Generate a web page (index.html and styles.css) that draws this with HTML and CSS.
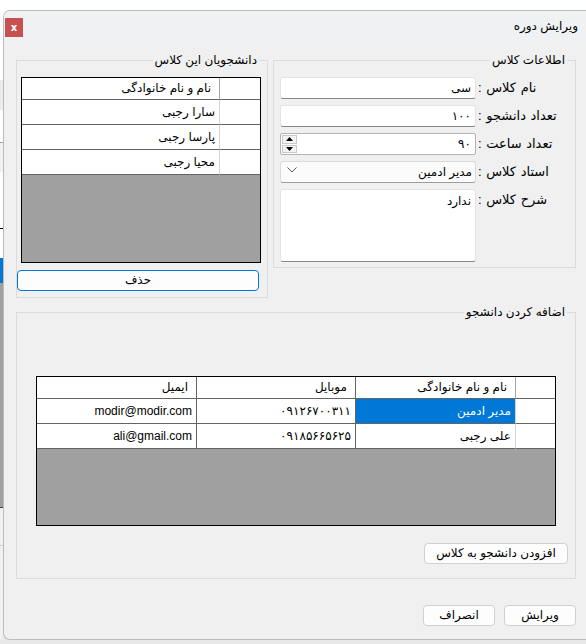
FILE: index.html
```html
<!DOCTYPE html>
<html lang="fa" dir="rtl">
<head>
<meta charset="utf-8">
<title>ویرایش دوره</title>
<link rel="stylesheet" href="styles.css">
</head>
<body>
<div class="desk">
  <div class="window">
    <header class="titlebar">
      <span class="title">ویرایش دوره</span>
      <button class="close" type="button">x</button>
    </header>

    <main class="content">
      <div class="top-row">
        <fieldset class="group info">
          <legend>اطلاعات کلاس</legend>
          <div class="form">
            <label class="label">نام کلاس :</label>
            <input class="field" value="سی">

            <label class="label">تعداد دانشجو :</label>
            <input class="field" value="۱۰۰">

            <label class="label">تعداد ساعت :</label>
            <div class="spin">
              <input class="spin-input" value="۹۰">
              <div class="spin-buttons">
                <span class="spin-btn"><svg width="7" height="4" viewBox="0 0 7 4"><path d="M0 4 L3.5 0 L7 4 Z" fill="#000"/></svg></span>
                <span class="spin-btn"><svg width="7" height="4" viewBox="0 0 7 4"><path d="M0 0 L3.5 4 L7 0 Z" fill="#000"/></svg></span>
              </div>
            </div>

            <label class="label">استاد کلاس :</label>
            <div class="combo">
              <span class="combo-text">مدیر ادمین</span>
              <svg class="chevron" width="10" height="6" viewBox="0 0 10 6"><polyline points="0.5,0.5 5,5 9.5,0.5" fill="none" stroke="#5a5a5a" stroke-width="1"/></svg>
            </div>

            <label class="label">شرح کلاس :</label>
            <textarea class="field memo">ندارد</textarea>
          </div>
        </fieldset>

        <fieldset class="group students">
          <legend>دانشجویان این کلاس</legend>
          <div class="grid-table students-table">
            <div class="cell rowhead head"></div>
            <div class="cell head">نام و نام خانوادگی</div>
            <div class="cell rowhead"></div>
            <div class="cell">سارا رجبی</div>
            <div class="cell rowhead"></div>
            <div class="cell">پارسا رجبی</div>
            <div class="cell rowhead"></div>
            <div class="cell">محیا رجبی</div>
          </div>
          <button class="btn btn-delete" type="button">حذف</button>
        </fieldset>
      </div>

      <fieldset class="group add">
        <legend>اضافه کردن دانشجو</legend>
        <div class="grid-table people-table">
          <div class="cell rowhead head"></div>
          <div class="cell head col">نام و نام خانوادگی</div>
          <div class="cell head col">موبایل</div>
          <div class="cell head">ایمیل</div>

          <div class="cell rowhead"></div>
          <div class="cell col selected">مدیر ادمین</div>
          <div class="cell col">۰۹۱۲۶۷۰۰۳۱۱</div>
          <div class="cell">modir@modir.com</div>

          <div class="cell rowhead"></div>
          <div class="cell col">علی رجبی</div>
          <div class="cell col">۰۹۱۸۵۶۶۵۶۲۵</div>
          <div class="cell">ali@gmail.com</div>
        </div>
        <div class="group-actions">
          <button class="btn btn-add" type="button">افزودن دانشجو به کلاس</button>
        </div>
      </fieldset>

      <div class="footer">
        <button class="btn btn-footer" type="button">ویرایش</button>
        <button class="btn btn-footer" type="button">انصراف</button>
      </div>
    </main>
  </div>
  <div class="parent-edge"></div>
</div>
</body>
</html>
```

FILE: styles.css
```css
* {
  box-sizing: border-box;
}

html,
body {
  margin: 0;
  padding: 0;
}

body {
  width: 586px;
  height: 644px;
  overflow: hidden;
  font-family: "Liberation Sans", "DejaVu Sans", sans-serif;
  font-size: 12px;
  color: #000;
}

/* desktop behind the dialog */
.desk {
  display: flex;
  height: 644px;
  background: linear-gradient(#ffffff 0 320px, #e8e8e8 320px);
}

/* sliver of the main application window on the left */
.parent-edge {
  flex: none;
  width: 3px;
  background: linear-gradient(
    #ffffff 0 80px,
    #ebebeb 80px 110px,
    #ffffff 110px 142px,
    #a0a0a0 142px 143px,
    #f0f0f0 143px 172px,
    #ffffff 172px 228px,
    #000000 228px 229px,
    #ffffff 229px 258px,
    #0078d7 258px 283px,
    #a0a0a0 283px 507px,
    #3c3c3c 507px 508px,
    #f0f0f0 508px 545px,
    #d0d0d0 545px 546px,
    #f0f0f0 546px 640px,
    #e8e8e8 640px
  );
}

/* dialog window */
.window {
  flex: 1;
  margin-top: 10px;
  height: 630px;
  display: flex;
  flex-direction: column;
  background: #f0f0f0;
  border: 1px solid #bcbcbc;
  border-right: none;
  border-radius: 7px 0 0 7px;
  overflow: hidden;
}

.titlebar {
  flex: none;
  height: 30px;
  display: flex;
  align-items: flex-start;
  justify-content: space-between;
  padding: 0 8px 0 1px;
  background: #eff1f3;
}

.title {
  line-height: 30px;
  font-size: 12px;
}

.close {
  width: 18px;
  height: 19px;
  margin-top: 7px;
  padding: 0;
  border: none;
  background: #c75050;
  color: #fff;
  font-family: "DejaVu Sans", sans-serif;
  font-size: 10px;
  font-weight: bold;
  line-height: 17px;
}

.content {
  flex: 1;
  padding: 12px 10px 0 12px;
}

.top-row {
  display: flex;
  align-items: flex-start;
  gap: 5px;
}

/* group boxes */
.group {
  margin: 0;
  padding: 0;
  min-width: 0;
  border: 1px solid #dcdcdc;
}

.group legend {
  padding: 0 2px;
  margin-right: 8px;
  line-height: 14px;
  font-size: 12px;
}

.info {
  width: 303px;
  padding: 10px 0 5px 6px;
}

.students {
  width: 252px;
  padding: 10px 0 6px 0;
}

.add {
  width: 560px;
  margin-top: 7px;
  padding: 57px 0 14px 0;
}

/* class info form */
.form {
  display: grid;
  grid-template-columns: 97px 196px;
  grid-template-rows: 22px 22px 22px 22px 73px;
  column-gap: 2px;
  row-gap: 6px;
}

.label {
  align-self: start;
  line-height: 22px;
  font-size: 13px;
  word-spacing: 1px;
  text-align: left;
  white-space: nowrap;
}

.field {
  font: inherit;
  color: #000;
  height: 22px;
  margin: 0;
  padding: 0 4px;
  background: #fff;
  border: 1px solid #e4e4e4;
  border-bottom-color: #868686;
  border-radius: 3px;
  outline: none;
}

.memo {
  height: 73px;
  padding: 4px 4px;
  resize: none;
  overflow: hidden;
  line-height: 14px;
}

.spin {
  display: flex;
  height: 22px;
  background: #fff;
  border: 1px solid #b4b4b4;
  border-radius: 2px;
}

.spin-input {
  flex: 1;
  min-width: 0;
  font: inherit;
  color: #000;
  border: none;
  outline: none;
  padding: 0 4px;
  background: transparent;
}

.spin-buttons {
  flex: none;
  width: 16px;
  display: flex;
  flex-direction: column;
  gap: 1px;
  padding: 1px 0 1px 1px;
}

.spin-btn {
  flex: 1;
  display: flex;
  align-items: center;
  justify-content: center;
  background: #f3f3f3;
  border: 1px solid #c9c9c9;
}

.combo {
  display: flex;
  align-items: center;
  justify-content: space-between;
  height: 22px;
  padding: 0 3px 0 6px;
  background: #fbfbfb;
  border: 1px solid #dadada;
  border-bottom-color: #9c9c9c;
  border-radius: 3px;
}

.chevron {
  margin-bottom: 4px;
}

/* item tables */
.grid-table {
  display: grid;
  grid-auto-rows: 25px;
  grid-template-rows: 22px;
  align-content: start;
  background: #a0a0a0;
  border: 1px solid #000;
  overflow: hidden;
}

.students-table {
  height: 186px;
  margin: 0 6px 0 4px;
  grid-template-columns: 41px 197px;
}

.people-table {
  height: 150px;
  margin: 0 19px;
  grid-template-columns: 40px 160px 159px 159px;
}

.cell {
  background: #fff;
  border-bottom: 1px solid #646464;
  padding: 0 4px;
  line-height: 24px;
  white-space: nowrap;
  overflow: hidden;
}

.cell.head {
  line-height: 21px;
  padding-right: 8px;
}

.cell.rowhead {
  border-left: 1px solid #d4d4d4;
}

.cell.rowhead.head {
  border-left-color: #a8a8a8;
}

.cell.col {
  border-left: 1px solid #646464;
}

.cell.selected {
  background: #0078d7;
  color: #fff;
}

/* buttons */
.btn {
  font: inherit;
  color: #000;
  height: 21px;
  padding: 0;
  background: #fdfdfd;
  border: 1px solid #d0d0d0;
  border-radius: 4px;
  line-height: 19px;
}

.btn-delete {
  display: block;
  width: 242px;
  margin: 7px 8px 0 0;
  border-color: #0078d7;
}

.group-actions {
  display: flex;
  margin-top: 17px;
  padding-right: 7px;
}

.btn-add {
  width: 144px;
}

.footer {
  display: flex;
  gap: 9px;
  margin-top: 26px;
}

.btn-footer {
  width: 72px;
}
```
